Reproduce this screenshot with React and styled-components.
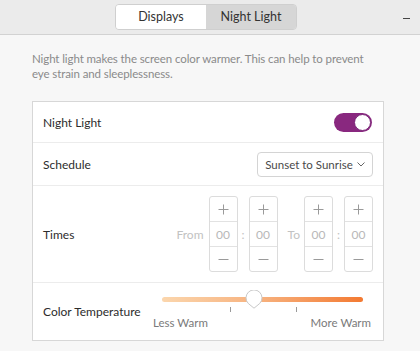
import React from "react";
import styled, { createGlobalStyle } from "styled-components";

const Global = createGlobalStyle`
  html, body { margin: 0; padding: 0; }
  body {
    background: #f7f7f7;
    font-family: Lato, "Noto Sans", sans-serif;
    color: #2e2e2e;
    width: 420px;
    height: 351px;
    overflow: hidden;
  }
`;

const Window = styled.div`
  display: flex;
  flex-direction: column;
  width: 420px;
  height: 351px;
`;

const Header = styled.header`
  display: grid;
  grid-template-columns: 1fr auto 1fr;
  align-items: center;
  height: 35px;
  box-sizing: border-box;
  padding: 4px 8px 5px 0;
  background: #ebebeb;
  border-bottom: 1px solid #d2d2d2;
`;

const TabGroup = styled.div`
  grid-column: 2;
  display: flex;
  border: 1px solid #cfcfcf;
  border-radius: 4px;
  overflow: hidden;
`;

const Tab = styled.div`
  width: 90px;
  height: 24px;
  display: flex;
  align-items: center;
  justify-content: center;
  font-size: 12.5px;
  color: #333;
  background: ${(p) => (p.$active ? "#d6d6d6" : "#ffffff")};
`;

const Minimize = styled.div`
  grid-column: 3;
  justify-self: end;
  width: 7px;
  height: 1px;
  margin-right: 2px;
  margin-top: 3px;
  background: #444;
`;

const Body = styled.main`
  display: flex;
  flex-direction: column;
  padding: 16px 36px 0 32px;
`;

const Description = styled.p`
  margin: 0 0 20px 0;
  max-width: 338px;
  font-size: 11.5px;
  letter-spacing: -0.1px;
  line-height: 15px;
  color: #8a8a8a;
`;

const Card = styled.section`
  display: flex;
  flex-direction: column;
  background: #ffffff;
  border: 1px solid #d7d7d7;
`;

const Row = styled.div`
  display: flex;
  align-items: center;
  justify-content: space-between;
  box-sizing: border-box;
  height: ${(p) => p.$h}px;
  padding: 0 10px 0 10px;
  border-top: ${(p) => (p.$first ? "none" : "1px solid #ececec")};
`;

const Label = styled.span`
  font-size: 12px;
  color: #2c2c2c;
`;

const Switch = styled.div`
  position: relative;
  width: 38px;
  height: 19px;
  border-radius: 10px;
  background: #89287f;
  margin-right: 1px;
`;

const Knob = styled.div`
  position: absolute;
  right: 1px;
  top: 1px;
  width: 17px;
  height: 17px;
  box-sizing: border-box;
  border-radius: 50%;
  background: #fff;
  border: 1px solid #7a2577;
`;

const Dropdown = styled.div`
  display: flex;
  align-items: center;
  gap: 4px;
  height: 25px;
  width: 116px;
  justify-content: center;
  box-sizing: border-box;
  border: 1px solid #d4d4d4;
  border-radius: 4px;
  font-size: 11.5px;
  color: #4a4a4a;
  background: #fff;
`;

const Times = styled.div`
  display: flex;
  align-items: center;
`;

const Faint = styled.span`
  font-size: 12px;
  color: #c2c2c2;
  margin: ${(p) => p.$m};
`;

const Spinner = styled.div`
  display: flex;
  flex-direction: column;
  width: 29px;
  border: 1px solid #dcdcdc;
  border-radius: 3px;
  box-sizing: border-box;
`;

const SpinCell = styled.div`
  height: 24px;
  display: flex;
  align-items: center;
  justify-content: center;
  font-size: 12px;
  color: #b8b8b8;
  border-top: ${(p) => (p.$top ? "none" : "1px solid #e2e2e2")};
`;

const Slider = styled.div`
  position: relative;
  width: 218px;
  height: 46px;
  margin-right: 2px;
`;

const Track = styled.div`
  position: absolute;
  left: 9px;
  right: 8px;
  top: 8px;
  height: 5px;
  border-radius: 3px;
  background: linear-gradient(to right, #fbd6ad, #f7b07c 50%, #f37a32);
`;

const Mark = styled.div`
  position: absolute;
  top: 18px;
  left: ${(p) => p.$x}px;
  width: 1px;
  height: 5px;
  background: #9a9a9a;
`;

const SliderLabel = styled.span`
  position: absolute;
  top: 27px;
  font-size: 11.5px;
  color: #7a7a7a;
  ${(p) => (p.$right ? "right: 0;" : "left: 0;")}
`;

const Thumb = styled.svg`
  position: absolute;
  left: 92px;
  top: 1px;
`;

const Spin = () => (
  <Spinner>
    <SpinCell $top>
      <svg width="11" height="11" viewBox="0 0 11 11">
        <path d="M5.5 0.5v10M0.5 5.5h10" stroke="#9a9a9a" strokeWidth="1" />
      </svg>
    </SpinCell>
    <SpinCell>00</SpinCell>
    <SpinCell>
      <svg width="11" height="11" viewBox="0 0 11 11">
        <path d="M0.5 5.5h10" stroke="#9a9a9a" strokeWidth="1" />
      </svg>
    </SpinCell>
  </Spinner>
);

export default function App() {
  return (
    <Window>
      <Global />
      <Header>
        <TabGroup>
          <Tab>Displays</Tab>
          <Tab $active>Night Light</Tab>
        </TabGroup>
        <Minimize />
      </Header>
      <Body>
        <Description>
          Night light makes the screen color warmer. This can help to prevent eye strain and
          sleeplessness.
        </Description>
        <Card>
          <Row $first $h={40}>
            <Label>Night Light</Label>
            <Switch>
              <Knob />
            </Switch>
          </Row>
          <Row $h={43}>
            <Label>Schedule</Label>
            <Dropdown>
              Sunset to Sunrise
              <svg width="8" height="5" viewBox="0 0 8 5">
                <path d="M0.5 0.5L4 4L7.5 0.5" fill="none" stroke="#666" strokeWidth="1" />
              </svg>
            </Dropdown>
          </Row>
          <Row $h={97}>
            <Label>Times</Label>
            <Times>
              <Faint $m="0 5px 0 0">From</Faint>
              <Spin />
              <Faint $m="0 4px">:</Faint>
              <Spin />
              <Faint $m="0 4px 0 10px">To</Faint>
              <Spin />
              <Faint $m="0 4px">:</Faint>
              <Spin />
            </Times>
          </Row>
          <Row $h={58}>
            <Label>Color Temperature</Label>
            <Slider>
              <Track />
              <Mark $x={77} />
              <Mark $x={143} />
              <Thumb width="18" height="19" viewBox="0 0 18 19">
                <path
                  d="M9 18.2 L3.2 13.4 A8 8 0 1 1 14.8 13.4 Z"
                  fill="#fff"
                  stroke="#c8c8c8"
                  strokeWidth="1"
                />
              </Thumb>
              <SliderLabel>Less Warm</SliderLabel>
              <SliderLabel $right>More Warm</SliderLabel>
            </Slider>
          </Row>
        </Card>
      </Body>
    </Window>
  );
}
